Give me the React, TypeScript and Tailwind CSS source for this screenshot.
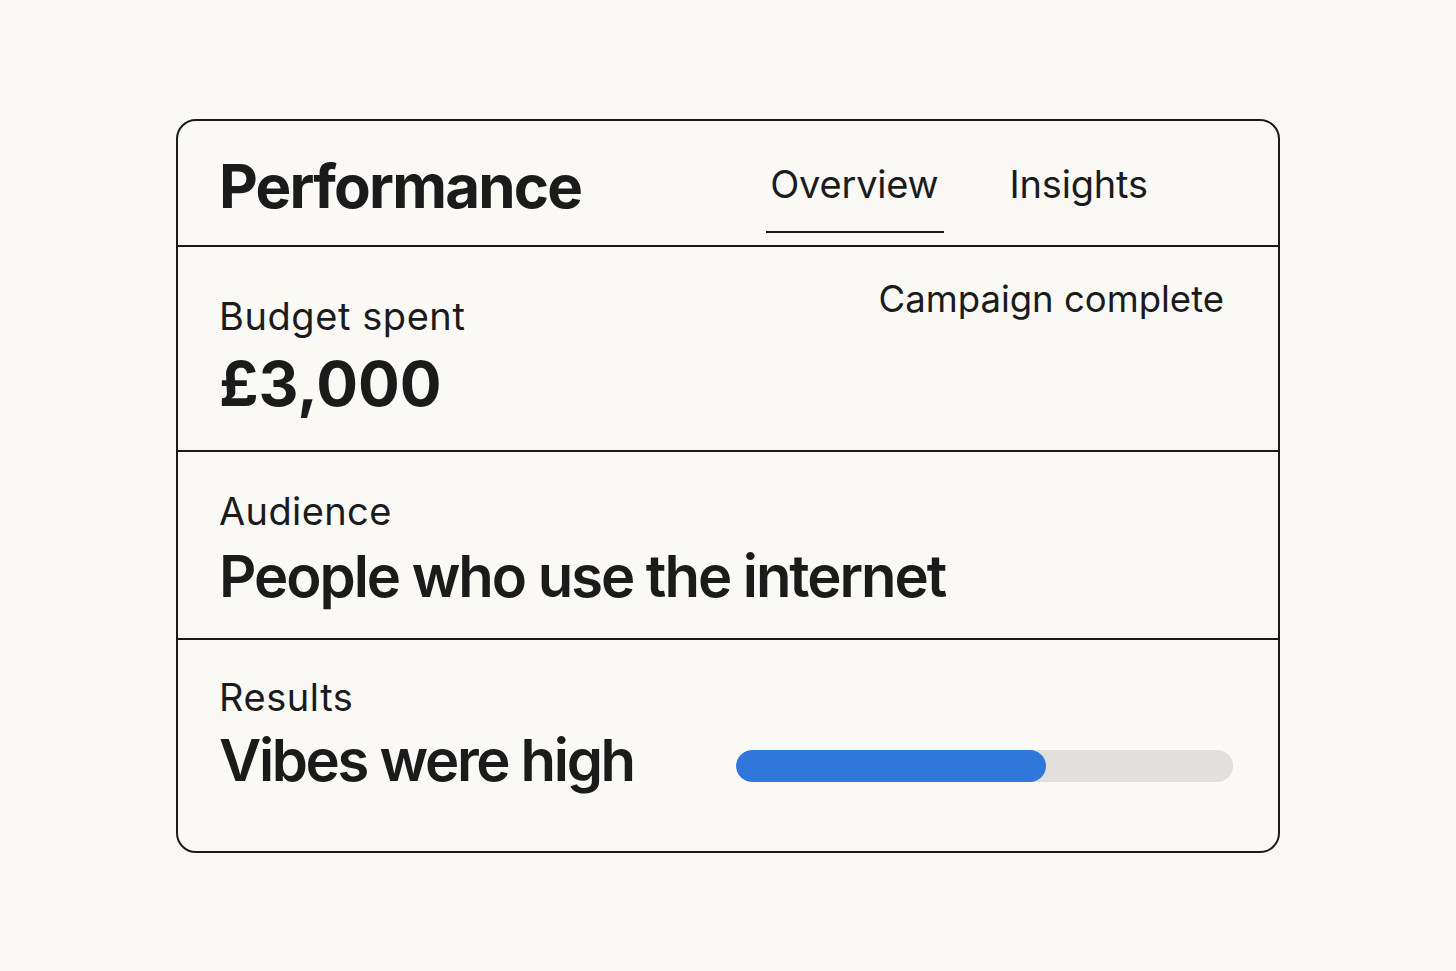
const tabs = [
  { label: "Overview", active: true },
  { label: "Insights", active: false },
];

export default function App() {
  return (
    <div
      className="flex h-screen w-full items-center justify-center bg-[#f9f8f4] text-[#1b1b1b]"
      style={{ fontFamily: "Inter, 'Liberation Sans', sans-serif" }}
    >
      <div className="flex h-[734px] w-[1104px] flex-col rounded-[20px] border-2 border-[#1a1a1a] bg-[#faf9f6]">
        {/* header */}
        <div className="flex h-[126px] shrink-0 border-b-2 border-[#1a1a1a] pl-[41px]">
          <h1 className="pt-[35px] text-[60px] font-bold leading-none tracking-[-0.03em]">
            Performance
          </h1>
          <div className="ml-[185px] flex gap-[62px] pt-[44px]">
            {tabs.map((tab) => (
              <div
                key={tab.label}
                className={`h-[68px] pl-[4px] pr-[5px] text-[38px] leading-none tracking-[-0.005em] ${
                  tab.active ? "border-b-2 border-[#1a1a1a]" : ""
                }`}
              >
                {tab.label}
              </div>
            ))}
          </div>
        </div>

        {/* budget */}
        <div className="flex h-[205px] shrink-0 justify-between border-b-2 border-[#1a1a1a] pl-[41px] pr-[54px]">
          <div className="pt-[50px]">
            <p className="text-[38px] leading-none tracking-[0.015em]">Budget spent</p>
            <p className="mt-[18px] text-[62px] font-bold leading-none">£3,000</p>
          </div>
          <p className="pt-[34px] text-[36.5px] leading-none">Campaign complete</p>
        </div>

        {/* audience */}
        <div className="h-[188px] shrink-0 border-b-2 border-[#1a1a1a] pl-[41px] pt-[40px]">
          <p className="text-[38px] leading-none tracking-[0.01em]">Audience</p>
          <p className="mt-[17px] text-[58px] font-semibold leading-none tracking-[-0.035em]">
            People who use the internet
          </p>
        </div>

        {/* results */}
        <div className="flex-1 pl-[41px] pt-[38px]">
          <p className="text-[38px] leading-none tracking-[0.015em]">Results</p>
          <div className="mt-[15px] flex items-start">
            <p className="w-[517px] shrink-0 text-[58px] font-semibold leading-none tracking-[-0.04em]">
              Vibes were high
            </p>
            <div className="mt-[19px] h-[32px] w-[497px] overflow-hidden rounded-full bg-[#e1e0dd]">
              <div className="h-full w-[310px] rounded-full bg-[#2f77db]" />
            </div>
          </div>
        </div>
      </div>
    </div>
  );
}
